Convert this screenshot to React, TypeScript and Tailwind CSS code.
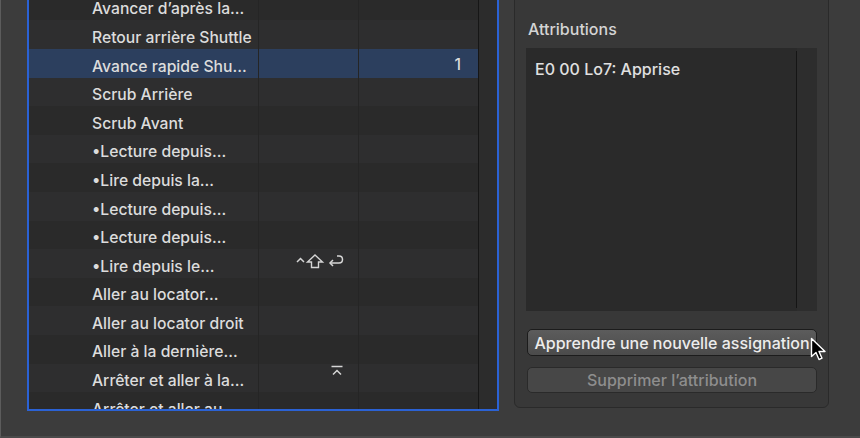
import React from "react";

const rows: { name: string; key?: string; val?: string; sel?: boolean }[] = [
  { name: "Avancer d’après la..." },
  { name: "Retour arrière Shuttle" },
  { name: "Avance rapide Shu...", val: "1", sel: true },
  { name: "Scrub Arrière" },
  { name: "Scrub Avant" },
  { name: "•Lecture depuis..." },
  { name: "•Lire depuis la..." },
  { name: "•Lecture depuis..." },
  { name: "•Lecture depuis..." },
  { name: "•Lire depuis le...", key: "cse" },
  { name: "Aller au locator..." },
  { name: "Aller au locator droit" },
  { name: "Aller à la dernière..." },
  { name: "Arrêter et aller à la...", key: "home" },
  { name: "Arrêter et aller au..." },
];

function KeyCSE() {
  return (
    <svg width="50" height="18" viewBox="0 0 50 18" fill="none" stroke="#d6d6d6" strokeWidth="1.5" strokeLinejoin="miter">
      <path d="M2 10 L5.5 6.5 L9 10" />
      <path d="M20 3 L27.5 10 L23.5 10 L23.5 15.5 L16.5 15.5 L16.5 10 L12.5 10 Z" strokeWidth="1.4" />
      <path d="M42 4 L44 4 Q47.5 4 47.5 7.5 Q47.5 11 44 11 L35 11" />
      <path d="M38 8 L35 11 L38 14" />
    </svg>
  );
}

function KeyHome() {
  return (
    <svg width="12" height="12" viewBox="0 0 12 12" fill="none" stroke="#d6d6d6" strokeWidth="1.5">
      <path d="M0.5 1.5 L11.5 1.5" />
      <path d="M2 9.5 L6 5.5 L10 9.5" />
    </svg>
  );
}

export default function App() {
  return (
    <div
      className="relative w-[860px] h-[438px] overflow-hidden bg-[#3c3c3c] border-l border-l-[#5c5c5c] border-b-2 border-b-[#4a4a4a] flex items-start"
      style={{ fontFamily: "Inter, 'Liberation Sans', sans-serif" }}
    >
      {/* Left list */}
      <div className="ml-[26px] mt-[-8.2px] w-[472px] h-[419.2px] border-x-2 border-b-2 border-[#2b62d4] overflow-hidden bg-[#2b2b2b] flex">
        <div className="w-[449px] flex flex-col">
          {rows.map((r, i) => (
            <div
              key={i}
              className={
                "flex h-[28.6px] shrink-0 " +
                (r.sel ? "bg-[#2c3f5e]" : i % 2 === 1 ? "bg-[#2e2e2f]" : "bg-[#2a2a2a]")
              }
            >
              <div className="w-[230px] border-r border-r-[#252525] pl-[63px] pt-[6px] flex items-center text-[15.7px] font-medium text-[#dcdcdc] whitespace-nowrap">
                {r.name}
              </div>
              <div className="w-[100px] border-r border-r-[#252525] flex items-center justify-end pr-[13px]">
                {r.key === "cse" && (
                  <span className="pt-[1px] mt-[-6px]">
                    <KeyCSE />
                  </span>
                )}
                {r.key === "home" && (
                  <span className="pr-[2px] mt-[-14px]">
                    <KeyHome />
                  </span>
                )}
              </div>
              <div className="w-[119px] flex items-center justify-end pr-[17px] pt-[3px] text-[15.7px] font-medium text-[#dcdcdc]">
                {r.val}
              </div>
            </div>
          ))}
        </div>
        <div className="w-px bg-[#161616]" />
        <div className="flex-1 bg-[#2c2c2c]" />
      </div>

      {/* Right panel */}
      <div className="ml-[15px] mt-[-20px] w-[315px] h-[428px] rounded-[6px] border border-[#2a2a2a] bg-[#383838] pt-[39px] pl-[11px] pr-[11px] flex flex-col">
        <div className="pl-[2px] h-[18px] leading-[18px] text-[16px] font-medium text-[#d4d4d4]">Attributions</div>
        <div className="mt-[10px] h-[263px] w-[291px] bg-[#2a2a2a] flex">
          <div className="flex-1 pl-[9px] pt-[11px] text-[16px] font-medium text-[#e0e0e0] leading-[20px] whitespace-nowrap">E0 00 Lo7: Apprise</div>
          <div className="w-px bg-[#151515] my-[3px]" />
          <div className="w-[20px] bg-[#2d2d2d]" />
        </div>
        <button className="mt-[18px] ml-[1px] w-[290px] h-[27px] rounded-[5px] border border-[#1c1c1c] bg-gradient-to-b from-[#5c5c5c] to-[#4b4b4b] text-[16px] font-medium text-[#ececec] leading-none whitespace-nowrap flex items-center justify-center">
          Apprendre une nouvelle assignation
        </button>
        <button className="mt-[11px] ml-[1px] w-[290px] h-[26px] rounded-[5px] border border-[#2a2a2a] bg-[#474747] text-[16px] font-medium text-[#8e8e8e] leading-none whitespace-nowrap flex items-center justify-center">
          Supprimer l’attribution
        </button>
      </div>

      {/* Cursor */}
      <svg className="absolute left-[809px] top-[337px]" width="20" height="26" viewBox="0 0 20 26">
        <path d="M1.5 1.5 L1.5 19.5 L6 15.5 L9 22.5 L12 21.2 L9 14.5 L15 14.5 Z" fill="#000" stroke="#fff" strokeWidth="1.4" strokeLinejoin="round" />
      </svg>
    </div>
  );
}
